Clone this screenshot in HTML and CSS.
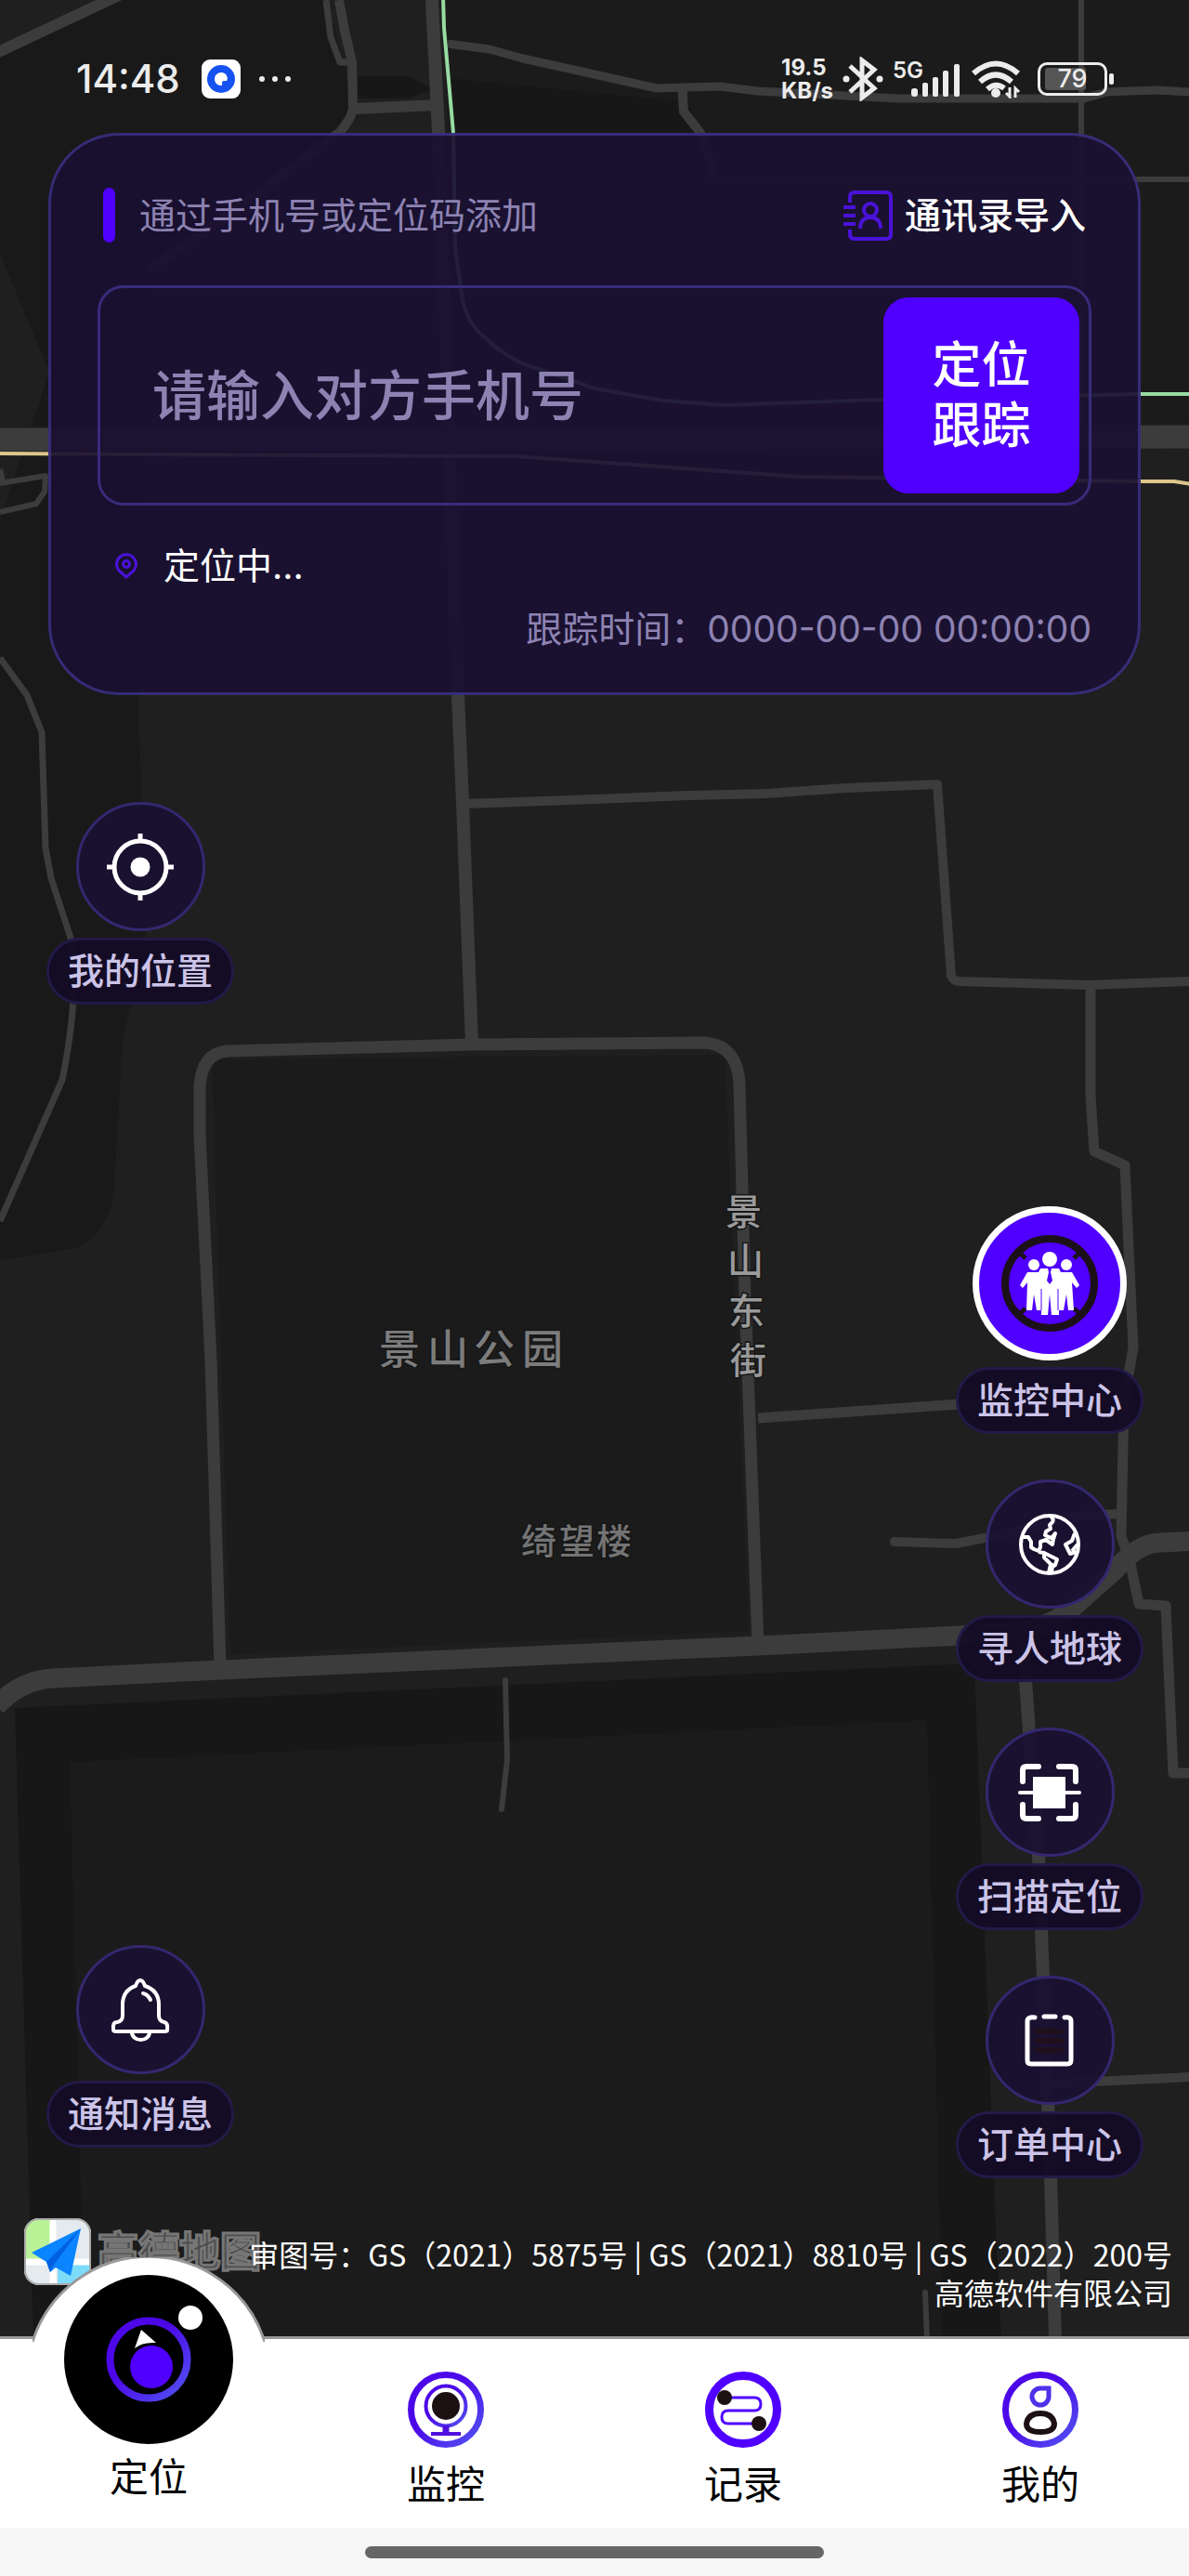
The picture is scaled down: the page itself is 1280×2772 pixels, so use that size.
FILE: index.html
```html
<!DOCTYPE html>
<html lang="zh-CN">
<head>
<meta charset="utf-8">
<meta name="viewport" content="width=device-width, initial-scale=1">
<title>定位</title>
<link rel="stylesheet" href="styles.css">
</head>
<body>
<div class="screen">
  <svg class="map" viewBox="0 0 1280 2517" preserveAspectRatio="xMidYMin slice" role="img" aria-label="地图">
    <rect width="1280" height="2517" fill="#1f1f1f"/>
    <path fill="#191919" d="M0 60 120 0H352L380 110 366 142 160 290 150 480V790L159 1050 Q134 1080 131 1136L122 1291Q110 1330 82 1343L0 1356V560L53 400 0 273Z"/>
    <path fill="#1b1b1b" d="M478 0H1280V470H490Z"/>
    <path fill="#171717" d="M385 82 440 82 465 96 440 106H385ZM482 84 640 100 740 110 754 143H488Z"/>
    <path fill="#1b1b1b" d="M228 1140 780 1135 806 1755 248 1780Z"/>
    <path fill="#171717" d="M16 1838 1049 1790 1072 2400 1078 2517H36Z"/>
    <path fill="#1b1b1b" d="M75 1896 998 1851 1012 2400 1015 2517H94L88 2400Z"/>
    <g class="road">
      <path stroke-width="12" d="M-6 58 130-6M382 117 470 113"/>
      <path stroke-width="7" d="M351 0 356 40 366 67H376"/>
      <path stroke-width="10" d="M365 0 371 33 379 67 380 117Q378 128 366 142L240 235 160 290"/>
      <path stroke-width="14" d="M465 0 472 143 493 748 498 864 508 1123"/>
      <path stroke-width="9" d="M482 47 527 53 563 63 640 80 707 95 775 93 815 98 967 106H1167L1191 99 1244 97 1280 99"/>
      <path stroke-width="10" d="M734 90 736 120 754 143 770 190"/>
      <path stroke-width="6" d="M1164 0V470M760 193H1280"/>
      <path stroke-width="25" d="M0 473 640 472 1280 470"/>
      <path stroke-width="6" d="M0 520 49 512 48 529 39 542 0 551M0 505 3 518"/>
      <path stroke-width="10" d="M498 865 640 860 740 856 824 854 910 848 1009 844 1024 1050Q1026 1055 1032 1056L1171 1060 1280 1056"/>
      <path stroke-width="7" d="M0 708 29 748 45 788 49 913 55 945 76 1009Q86 1070 67 1162L0 1314"/>
      <path stroke-width="13" d="M237 1793 227 1463 215 1222V1170Q217 1133 245 1131L508 1124 759 1122Q794 1125 796 1166L802 1394 816 1768"/>
      <path stroke-width="21" d="M-4 1836Q22 1808 57 1806L237 1797 816 1771 1033 1760 1100 1755Q1135 1748 1155 1730L1200 1690Q1225 1660 1249 1660L1290 1658"/>
      <path stroke-width="11" d="M816 1526 1033 1511H1090"/>
      <path stroke-width="10" stroke-linecap="round" d="M963 1659 1029 1661 1086 1650 1159 1631 1208 1629M1135 2242 1280 2235"/>
      <path stroke-width="11" d="M1174 1061V1179L1178 1239 1211 1254 1215 1343 1220 1450 1210 1506 1207 1653 1216 1678 1226 1726 1255 1728 1263 1908H1280"/>
      <path stroke-width="14" d="M1100 1755 1118 1997 1131 2341 1136 2517"/>
      <path stroke-width="6" stroke-linecap="round" d="M544 1808 546 1894 540 1947M996 2467 998 2517"/>
    </g>
    <path class="line-green" d="M477-4 478 30 488 143 490 267 498 323Q504 350 522 363 550 390 580 397L640 418 713 431 779 436 950 430 1228 424H1284"/>
    <path class="line-yellow" d="M-4 488 555 491 640 497 860 513 1228 518H1264L1284 521"/>
    <g class="place">
      <text class="place-park" x="408 460 510 562" y="1468">景山公园</text>
      <text class="place-hall" x="561 602 642" y="1672">绮望楼</text>
      <text class="place-street" x="781 783 784 786" y="1318 1371 1425 1478">景山东街</text>
    </g>
  </svg>

  <header class="status">
    <div class="status-side">
      <span class="clock">14:48</span>
      <svg class="app-dot" viewBox="0 0 42 42" aria-hidden="true"><rect width="42" height="42" rx="9" fill="#fff"/><circle cx="21" cy="21" r="15" fill="#1552f0"/><path fill="#fff" d="M20 14a7 7 0 1 0 2 14v-3q0-2 2-2h3l1-3a7 7 0 0 0-8-6Z"/></svg>
      <svg class="more" viewBox="0 0 36 8" aria-hidden="true"><circle cx="4" cy="4" r="3"/><circle cx="18" cy="4" r="3"/><circle cx="32" cy="4" r="3"/></svg>
    </div>
    <div class="status-side status-right">
      <span class="speed">19.5<br>KB/s</span>
      <svg class="bt" viewBox="0 0 44 48" aria-hidden="true"><path d="M8 10 34 34 21 44V4L34 14 8 38"/><circle cx="4" cy="24" r="3.5"/><circle cx="40" cy="24" r="3.5"/></svg>
      <span class="signal">
        <span class="net">5G</span>
        <svg class="bars" viewBox="0 0 53 36" aria-hidden="true"><rect x="0" y="26" width="7" height="9" rx="3"/><rect x="12" y="20" width="6" height="15" rx="2"/><rect x="23" y="14" width="6" height="21" rx="2"/><rect x="34" y="7" width="6" height="28" rx="2"/><rect x="46" y="0" width="6" height="35" rx="2"/></svg>
      </span>
      <svg class="wifi" viewBox="0 0 54 42" aria-hidden="true"><path d="M3 15Q27-6 51 15M10 24Q27 9 44 24M18 32Q27 24 36 31"/><circle cx="27" cy="36" r="5"/><path class="thin" d="M42 30V40L38 36M48 41V31L52 35"/></svg>
      <span class="battery"><span class="battery-level" style="width:74%"></span><span class="battery-text">79</span></span>
    </div>
  </header>

  <form class="card">
    <div class="card-head">
      <label class="card-title" for="phone">通过手机号或定位码添加</label>
      <button class="import" type="button">
        <svg viewBox="0 0 54 56" aria-hidden="true"><path d="M7 14V8Q7 3 12 3H46Q51 3 51 8V48Q51 53 46 53H12Q7 53 7 48V43"/><path d="M0 19H13M0 28H13M0 37H13"/><circle cx="29" cy="22" r="7"/><path d="M18 42Q18 30 29 30T40 42"/></svg>
        通讯录导入
      </button>
    </div>
    <div class="search">
      <input id="phone" type="tel" placeholder="请输入对方手机号">
      <button class="track" type="submit">定位<br>跟踪</button>
    </div>
    <p class="locating">
      <svg viewBox="0 0 24 28" aria-hidden="true"><path d="M12 26 4 19A10.500 10.500 0 1 1 20 19Z"/><circle cx="12" cy="12" r="3.500"/></svg>
      定位中...
    </p>
    <p class="time">跟踪时间：0000-00-00 00:00:00</p>
  </form>

  <main class="stage">
    <div class="tools tools-left">
      <button class="tool" type="button">
        <span class="disc"><svg viewBox="0 0 72 72" aria-hidden="true"><circle cx="36" cy="36" r="28" fill="none" stroke="#fff" stroke-width="5"/><circle cx="36" cy="36" r="10.500" fill="#fff"/><path d="M36 0V8M36 64V72M0 36H8M64 36H72" stroke="#fff" stroke-width="5"/></svg></span>
        <span class="pill">我的位置</span>
      </button>
      <button class="tool" type="button">
        <span class="disc"><svg viewBox="0 0 72 72" fill="none" stroke="#fff" stroke-width="4" stroke-linecap="round" stroke-linejoin="round" aria-hidden="true"><path d="M31 10Q33 4 36 4T41 10Q56 15 56 30V42Q56 48 62 49 66 50 65 58 65 59 62 59H10Q7 59 7 57 6 49 11 49 17 48 17 42V30Q17 15 31 10Z"/><path d="M27 60A9.500 8 0 0 0 46 60M39 18Q44 19 47 25"/></svg></span>
        <span class="pill">通知消息</span>
      </button>
    </div>
    <div class="tools tools-right">
      <button class="tool" type="button">
        <span class="disc disc-main"><svg viewBox="0 0 104 104" aria-hidden="true"><circle cx="52" cy="52" r="48" fill="none" stroke="#1c1018" stroke-width="8"/><path stroke="#1c1018" stroke-width="5" d="M17 17 26 25M87 17 78 25M17 87 26 79M87 87 78 79"/><g fill="#fff"><circle cx="52" cy="26" r="8"/><circle cx="35" cy="32" r="6"/><circle cx="70" cy="32" r="6"/><path d="M28 40H40L42 36H62L64 40H76L84 54 81 57 76 51 78 81H72L70 64 67 81H62V86H54L52 64 50 86H43V81H38L35 64 33 81H27L28 51 23 57 20 54Z"/></g><path fill="#5000ff" d="M50 36H54L53 40 55 49 52 53 49 49 51 40Z"/><path stroke="#5000ff" stroke-width="1" d="M43 58V81M61 58V81"/></svg></span>
        <span class="pill">监控中心</span>
      </button>
      <button class="tool" type="button">
        <span class="disc"><svg viewBox="0 0 72 72" fill="none" stroke="#fff" stroke-width="4" stroke-linejoin="round" aria-hidden="true"><circle cx="36" cy="36" r="31"/><path d="M37 6Q42 9 38 13L36 15 37 19 32 22 31 26 35 28 38 29 42 24 40 30 39 36 32 31 26 33V39L24 43 19 41 16 39 16 33 13 28 7 28M24 44 30 45 44 52 42 58 39 60 38 66M30 45V50L37 57 41 59M37 58 35 66M63 24 60 32 53 36 58 46 65 44M66 36 60 43"/></svg></span>
        <span class="pill">寻人地球</span>
      </button>
      <button class="tool" type="button">
        <span class="disc"><svg viewBox="0 0 72 72" fill="none" stroke="#fff" stroke-width="6" stroke-linecap="round" aria-hidden="true"><path d="M7 24V12Q7 8 11 8H24M46 8H60Q64 8 64 12V24M7 49V60Q7 64 11 64H24M46 64H60Q64 64 64 60V49"/><path stroke-width="4" d="M4 36H68"/><rect x="21" y="22" width="29" height="28" fill="#fff"/></svg></span>
        <span class="pill">扫描定位</span>
      </button>
      <button class="tool" type="button">
        <span class="disc"><svg viewBox="0 0 72 72" fill="none" stroke="#fff" stroke-width="5" stroke-linecap="round" aria-hidden="true"><path stroke="#20101c" stroke-width="6" d="M23 26H48M23 36H48M23 46H48"/><path d="M20 11Q12 10 12 15V57Q12 61 16 61H55Q59 61 59 57V15Q59 10 52 11M30 10H42"/></svg></span>
        <span class="pill">订单中心</span>
      </button>
    </div>
  </main>

  <div class="credit">
    <div class="brand">
      <svg viewBox="0 0 72 72" aria-hidden="true"><defs><clipPath id="tile"><rect width="72" height="72" rx="16"/></clipPath></defs><g clip-path="url(#tile)"><rect width="72" height="72" fill="#e4eaee"/><path fill="#b9f296" d="M0 0H28V46H0Z"/><path fill="#7ddcfa" d="M36 50H72V72H36Z"/><path stroke="#fff" stroke-width="7" d="M31 0V72M0 47H72"/></g><rect x="1" y="1" width="70" height="70" rx="15" fill="none" stroke="#aaa" stroke-width="2"/><path fill="#0b84ff" d="M8 37 61 11 50 62 34 53 28 58 24 47Z"/><path fill="#0060e0" d="M61 11 24 47 28 58 32 50Z"/></svg>
      <span>高德地图</span>
    </div>
    <p class="license">审图号：GS（2021）5875号 | GS（2021）8810号 | GS（2022）200号<br>高德软件有限公司</p>
  </div>

  <nav class="tabs">
    <a class="tab tab-active" href="#locate">
      <svg class="bump" viewBox="0 0 250 91" aria-hidden="true"><path fill="#fff" stroke="#999" stroke-width="3" d="M0 91A131 131 0 0 1 250 91"/></svg>
      <svg class="tab-disc" viewBox="0 0 182 182" aria-hidden="true"><defs><linearGradient id="hue" x1="0" y1="0" x2="1" y2="1"><stop offset=".4" stop-color="#4c08e8"/><stop offset=".9" stop-color="#5048f0"/></linearGradient></defs><circle cx="91" cy="91" r="91"/><circle cx="91" cy="91" r="41.500" fill="none" stroke="url(#hue)" stroke-width="8"/><circle cx="94" cy="99" r="23" fill="#5000ff"/><path fill="#fff" d="M83 59 99 73Q84 72 76 79Z"/><circle cx="136" cy="46" r="13" fill="#fff"/></svg>
      定位
    </a>
    <a class="tab" href="#monitor">
      <svg viewBox="0 0 82 82" fill="none" stroke="url(#hue)" aria-hidden="true"><circle cx="41" cy="41" r="37.500" stroke-width="7"/><circle cx="41" cy="37" r="21.500" stroke-width="4"/><path stroke="#5010dd" stroke-width="7" d="M41 58V67"/><path stroke="#5010dd" stroke-width="4" d="M25 67H57"/><circle cx="41" cy="37" r="15" fill="#1c1012" stroke="none"/></svg>
      监控
    </a>
    <a class="tab" href="#records">
      <svg viewBox="0 0 82 82" fill="none" stroke="#5000ff" aria-hidden="true"><circle cx="41" cy="41" r="36.500" stroke-width="9"/><path stroke-width="3" d="M22 28H53Q60 28 60 35T53 42H25Q18 42 18 49T25 56H57"/><circle cx="21" cy="28" r="8" fill="#1c1012" stroke="none"/><circle cx="58" cy="56" r="8" fill="#1c1012" stroke="none"/></svg>
      记录
    </a>
    <a class="tab" href="#mine">
      <svg viewBox="0 0 82 82" fill="none" stroke="url(#hue)" aria-hidden="true"><circle cx="41" cy="41" r="37.500" stroke-width="7"/><path stroke="#5030e8" stroke-width="5" d="M50 18V27A9 9 0 1 1 41 18Z"/><path stroke="#1c1012" stroke-width="6" d="M26 56Q28 45 41 45T56 56Q56 65 41 65T26 56Z"/></svg>
      我的
    </a>
  </nav>
  <div class="home"><span></span></div>
</div>
</body>
</html>
```
FILE: styles.css
```css
* { box-sizing: border-box; }

body {
  margin: 0;
  background: #1f1f1f;
  font-family: Inter, "Noto Sans CJK SC", sans-serif;
  font-size: 39px;
  line-height: 56px;
  color: #fff;
}

p { margin: 0; }
svg { display: block; flex: none; }

button {
  margin: 0;
  padding: 0;
  border: 0;
  background: none;
  font: inherit;
  color: inherit;
  cursor: pointer;
}

.screen {
  position: relative;
  isolation: isolate;
  min-height: 100vh;
  display: flex;
  flex-direction: column;
}

/* Map */
.map {
  position: absolute;
  inset: 0;
  z-index: -1;
  width: 100%;
  height: calc(100% - 255px);
}
.road path { fill: none; stroke: #3c3c3c; stroke-linejoin: round; }
.line-green { fill: none; stroke: #97dba2; stroke-width: 4px; }
.line-yellow { fill: none; stroke: #dcc68a; stroke-width: 4px; }
.place text { paint-order: stroke; stroke: #171717; stroke-width: 3px; font-weight: 500; }
.place-park { font-size: 44px; fill: #7c7c7c; }
.place-hall { font-size: 38px; fill: #747474; }
.place-street { font-size: 39px; fill: #9a9a9a; }

/* Status bar */
.status {
  display: flex;
  justify-content: space-between;
  height: 143px;
  padding: 57px 88px 30px 82px;
  color: #ececec;
}
.status-side { display: flex; align-items: center; }
.status svg { fill: #ececec; }
.clock { font-size: 42px; font-weight: 500; }
.app-dot { width: 42px; height: 42px; margin-left: 23px; }
.more { width: 36px; height: 8px; margin-left: 19px; }
.status-right { gap: 10px; }
.speed { font-size: 24px; line-height: 25px; font-weight: 700; }
.bt { width: 44px; height: 48px; }
.bt path { fill: none; stroke: #ececec; stroke-width: 5; }
.signal { display: flex; align-items: flex-end; width: 74px; height: 40px; }
.net { align-self: flex-start; width: 20px; font-size: 24px; line-height: 22px; font-weight: 600; }
.bars { width: 53px; height: 36px; }
.wifi { width: 54px; height: 42px; }
.wifi path { fill: none; stroke: #ececec; stroke-width: 6; }
.wifi .thin { stroke-width: 3; }
.battery {
  position: relative;
  width: 75px;
  height: 36px;
  margin-left: 8px;
  padding: 3px 5px;
  border: 3px solid #ececec;
  border-radius: 10px;
}
.battery::after {
  content: "";
  position: absolute;
  left: 74px;
  top: 9px;
  width: 5px;
  height: 12px;
  border-radius: 2px;
  background: #ececec;
}
.battery-level { display: block; height: 24px; border-radius: 3px; background: #555; }
.battery-text {
  position: absolute;
  inset: 0;
  font-size: 27px;
  line-height: 30px;
  font-weight: 500;
  text-align: center;
}

/* Search card */
.card {
  margin: 0 52px;
  padding: 56px 50px 40px;
  border: 3px solid rgba(84, 72, 190, .5);
  border-radius: 76px;
  background: rgba(26, 16, 50, .93);
}
.card-head {
  display: flex;
  align-items: center;
  justify-content: space-between;
  height: 59px;
  padding: 0 6px;
}
.card-title { display: flex; align-items: center; gap: 26px; color: #8d83b2; }
.card-title::before {
  content: "";
  width: 13px;
  height: 59px;
  border-radius: 7px;
  background: #5000ff;
}
.import { display: flex; align-items: center; gap: 12px; font-weight: 500; }
.import svg { width: 54px; height: 56px; fill: none; stroke: #4a12d8; stroke-width: 4; }

.search {
  display: flex;
  align-items: center;
  margin-top: 46px;
  padding: 10px;
  border: 3px solid #372c7c;
  border-radius: 28px;
}
.search input {
  flex: 1;
  min-width: 0;
  height: 120px;
  padding: 0 46px;
  border: 0;
  outline: 0;
  background: none;
  font: inherit;
  font-size: 58px;
  font-weight: 500;
  color: #fff;
}
.search input::placeholder { color: #8d83b2; opacity: 1; }
.track {
  width: 211px;
  height: 211px;
  border-radius: 27px;
  background: #5000ff;
  font-size: 53px;
  font-weight: 500;
  line-height: 65px;
}
.locating {
  display: flex;
  align-items: center;
  gap: 28px;
  margin-top: 37px;
  padding-left: 19px;
}
.locating svg { width: 24px; height: 28px; fill: none; stroke: #4a12d8; stroke-width: 3; }
.time { margin-top: 12px; text-align: right; color: #8d83b2; }

/* Floating tools */
.stage {
  flex: 1;
  display: flex;
  justify-content: space-between;
  padding: 0 49px 0 50px;
}
.tools { display: flex; flex-direction: column; }
.tools-left { justify-content: space-between; padding: 115px 0 33px; }
.tools-right { justify-content: flex-end; gap: 49px; }
.tool { display: flex; flex-direction: column; align-items: center; gap: 7px; font-weight: 500; }
.disc {
  display: flex;
  align-items: center;
  justify-content: center;
  width: 139px;
  height: 139px;
  border: 3px solid #33286f;
  border-radius: 50%;
  background: rgba(26, 16, 50, .92);
}
.disc svg { width: 72px; height: 72px; }
.disc-main { width: 166px; height: 166px; border: 7px solid #fff; background: #5000ff; }
.disc-main svg { width: 104px; height: 104px; }
.pill {
  padding: 5px 20px;
  border: 3px solid #221a46;
  border-radius: 36px;
  background: rgba(20, 12, 38, .94);
  line-height: 56px;
  height: 72px;
  width: 202px;
  white-space: nowrap;
  color: #cbc4e8;
}

/* Map credit */
.credit { display: grid; padding: 43px 18px 27px 26px; }
.brand, .license { grid-area: 1 / 1; }
.brand {
  display: flex;
  align-items: center;
  align-self: start;
  justify-self: start;
  gap: 7px;
  height: 72px;
  font-size: 44px;
  font-weight: 700;
  color: #4c4c4c;
  -webkit-text-stroke: 3px #767676;
}
.brand svg { width: 72px; height: 72px; }
.license {
  justify-self: end;
  padding-top: 18px;
  font-family: "Noto Sans CJK SC", sans-serif;
  font-size: 32px;
  line-height: 41px;
  text-align: right;
}

/* Tab bar */
.tabs {
  display: grid;
  grid-template-columns: repeat(4, 1fr);
  height: 206px;
  border-top: 3px solid #999;
  background: #fff;
}
.tab {
  position: relative;
  display: flex;
  flex-direction: column;
  align-items: center;
  justify-content: flex-end;
  gap: 12px;
  padding-bottom: 18px;
  font-size: 42px;
  color: #000;
  text-decoration: none;
}
.tab svg { width: 82px; height: 82px; }
.tab-active { gap: 8px; padding-bottom: 26px; }
.tab .tab-disc { position: relative; width: 182px; height: 182px; margin-top: -92px; }
.tab .bump {
  position: absolute;
  left: 50%;
  bottom: 200px;
  width: 250px;
  height: 91px;
  margin-left: -125px;
}
.home { display: flex; justify-content: center; height: 52px; padding-top: 20px; background: #f6f6f6; }
.home span { width: 494px; height: 13px; border-radius: 7px; background: #666; }
```
